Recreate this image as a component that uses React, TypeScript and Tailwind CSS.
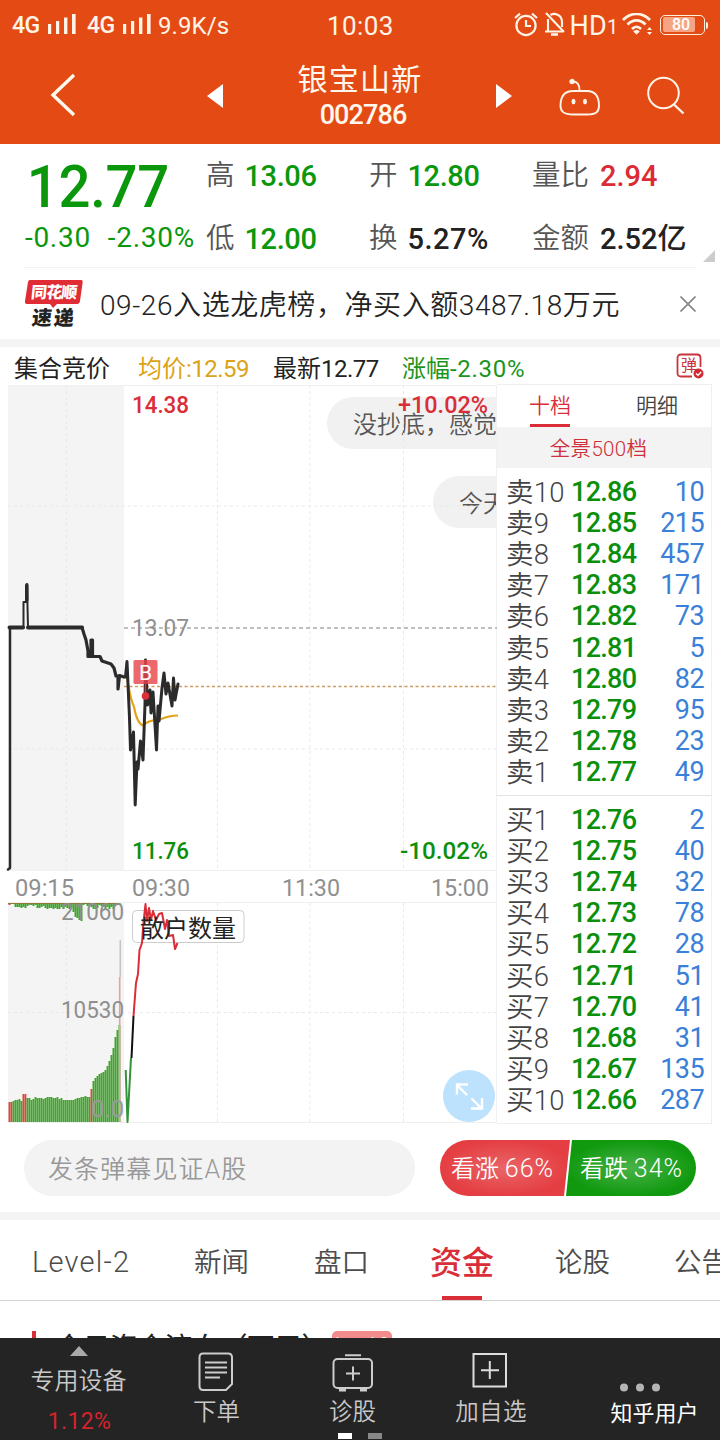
import React from "react";

type Level = { label: string; price: string; volume: string };

const sells: Level[] = [
  { label: "卖10", price: "12.86", volume: "10" },
  { label: "卖9", price: "12.85", volume: "215" },
  { label: "卖8", price: "12.84", volume: "457" },
  { label: "卖7", price: "12.83", volume: "171" },
  { label: "卖6", price: "12.82", volume: "73" },
  { label: "卖5", price: "12.81", volume: "5" },
  { label: "卖4", price: "12.80", volume: "82" },
  { label: "卖3", price: "12.79", volume: "95" },
  { label: "卖2", price: "12.78", volume: "23" },
  { label: "卖1", price: "12.77", volume: "49" },
];

const buys: Level[] = [
  { label: "买1", price: "12.76", volume: "2" },
  { label: "买2", price: "12.75", volume: "40" },
  { label: "买3", price: "12.74", volume: "32" },
  { label: "买4", price: "12.73", volume: "78" },
  { label: "买5", price: "12.72", volume: "28" },
  { label: "买6", price: "12.71", volume: "51" },
  { label: "买7", price: "12.70", volume: "41" },
  { label: "买8", price: "12.68", volume: "31" },
  { label: "买9", price: "12.67", volume: "135" },
  { label: "买10", price: "12.66", volume: "287" },
];

function Signal() {
  return (
    <svg width="28" height="20" viewBox="0 0 28 20" fill="#fff4e8">
      <rect x="0" y="10" width="3.2" height="10" />
      <rect x="8" y="7" width="3.2" height="13" />
      <rect x="16" y="3.5" width="3.4" height="16.5" />
      <rect x="24" y="0" width="3.6" height="20" />
    </svg>
  );
}

function StatusBar() {
  return (
    <div className="relative flex h-12 items-center pt-[2px] text-[#fff4e8]">
      <span className="ml-3 mt-[2px] w-[36px] text-[23px] font-medium tracking-[-0.5px]">4G</span>
      <span className="-mt-[3px]"><Signal /></span>
      <span className="ml-[11px] mt-[2px] w-[36px] text-[23px] font-medium tracking-[-0.5px]">4G</span>
      <span className="-mt-[3px]"><Signal /></span>
      <span className="ml-[7px] mt-[2px] text-[24px] tracking-[0.1px]">9.9K/s</span>
      <span className="absolute left-[327px] top-[11px] text-[26px] leading-[30px] tracking-[0.4px]">10:03</span>
      <div className="ml-auto flex items-center pr-[12px]">
        <svg width="24" height="26" viewBox="0 0 24 26" fill="none" stroke="#fff4e8" strokeWidth="2.2">
          <circle cx="12" cy="13.500" r="9.6" />
          <path d="M12 8V14H17M1 6L6 1.700M23 6L18 1.700" />
        </svg>
        <svg className="ml-[6px]" width="22" height="26" viewBox="0 0 22 26" fill="none" stroke="#fff4e8" strokeWidth="2.1">
          <path d="M1 19.500H19M4 19V7M6.500 3C10 0.800 18 2 18 10V15M2 1L20 20" />
          <path d="M7 22.500H14" strokeWidth="2.600" />
        </svg>
        <span className="ml-[3px] mt-[1px] text-[27px] leading-[30px] tracking-[0.3px]">HD</span>
        <span className="mt-[4px] w-[9px] text-[20px] leading-[20px]">1</span>
        <svg className="ml-[6px]" width="31" height="24" viewBox="0 0 31 24" fill="none" stroke="#fff4e8" strokeWidth="2.700">
          <path d="M1 7C9 -1 20 -1 28 7M5.500 11.500C11 6 18 6 23.500 11.500M10 16C13 13 16 13 19 16" />
          <path d="M14.500 21L11.700 18.500Q14.500 16 17.300 18.500Z" fill="#fff4e8" strokeWidth="1" />
          <path d="M25 17L27.500 14L30 17ZM25 19L27.500 22L30 19Z" fill="#fff4e8" stroke="none" />
        </svg>
        <div className="-mt-px ml-[7px] flex h-[20px] w-[45px] rounded-[5px] border-[1.5px] border-[#fff0dc] p-[1.5px]">
          <div className="flex w-[32px] items-center justify-center rounded-[2px] bg-[#f5a583] pl-[5px] text-[16px] font-medium leading-none text-white">80</div>
        </div>
        <div className="ml-px h-[7px] w-[2px] rounded-r bg-[#fff0dc]" />
      </div>
    </div>
  );
}

function TitleBar() {
  return (
    <div className="flex h-24 items-center">
      <svg className="-mt-[3px] ml-[50px]" width="26" height="44" viewBox="0 0 26 44" fill="none" stroke="#fffaf0" strokeWidth="3.400">
        <path d="M24 2L3 22L24 42" />
      </svg>
      <svg className="ml-[131px]" width="16" height="24" viewBox="0 0 16 24" fill="#fff">
        <path d="M16 0V24L0 12Z" />
      </svg>
      <div className="ml-[64px] flex w-[152px] flex-col items-center text-[#fff8ee]">
        <span className="mr-[6px] text-[30px] leading-[38px] tracking-[1.2px]">银宝山新</span>
        <span className="text-[27px] font-medium leading-[32px] tracking-[-0.900px]">002786</span>
      </div>
      <svg className="ml-[57px]" width="16" height="24" viewBox="0 0 16 24" fill="#fff">
        <path d="M0 0V24L16 12Z" />
      </svg>
      <svg className="ml-[47px] mt-[2px]" width="42" height="38" viewBox="0 0 42 38" fill="none" stroke="#fff4e8" strokeWidth="1.900">
        <path d="M13.500 3.500C18 3.500 20.500 5.500 20.500 12.500" />
        <circle cx="13" cy="3.500" r="1.700" fill="#fff4e8" />
        <path d="M14 13H28C36 13 40 18 40 28C40 34 37 36.500 28 36.500H14C5 36.500 1.500 34 1.500 28C1.500 18 6 13 14 13Z" />
        <ellipse cx="14.500" cy="23.500" rx="2" ry="2.700" fill="#fff4e8" stroke="none" />
        <ellipse cx="26" cy="23.500" rx="2" ry="2.700" fill="#fff4e8" stroke="none" />
      </svg>
      <svg className="ml-[45px]" width="40" height="40" viewBox="0 0 40 40" fill="none" stroke="#fff4e8" strokeWidth="2">
        <circle cx="17.500" cy="17" r="15.300" />
        <path d="M28 28.500L37.500 37.500" strokeWidth="2.400" />
      </svg>
    </div>
  );
}

function Stat({ label, value, color }: { label: string; value: string; color: string }) {
  return (
    <div className="flex items-center whitespace-nowrap">
      <span className="mr-[10px] mt-px text-[28.5px] font-[350] text-[#555]">{label}</span>
      <span className={"text-[29px] font-medium " + color}>{value}</span>
    </div>
  );
}

function Quote() {
  return (
    <section className="relative h-[124px] leading-[40px]">
      <div className="mx-6 grid h-[124px] grid-cols-[182px_163px_163px_1fr] grid-rows-[63px_60px] border-b border-[#f2f2f2]">
        <div className="origin-left scale-x-[0.938] pl-[3px] pt-[10px] text-[60px] font-medium leading-[66px] tracking-[-0.300px] text-[#0b970b]">12.77</div>
        <div className="pt-[11px]"><Stat label="高" value="13.06" color="tracking-[-0.4px] text-[#0b970b]" /></div>
        <div className="pt-[11px]"><Stat label="开" value="12.80" color="tracking-[-0.4px] text-[#0b970b]" /></div>
        <div className="pt-[11px]"><Stat label="量比" value="2.94" color="pl-px text-[#db2b36]" /></div>
        <div className="flex gap-[17px] whitespace-nowrap pl-px pt-[11px] text-[28px] tracking-[0.700px] text-[#0b970b]"><span>-0.30</span><span>-2.30%</span></div>
        <div className="pt-[11px]"><Stat label="低" value="12.00" color="tracking-[-0.4px] text-[#0b970b]" /></div>
        <div className="pt-[11px]"><Stat label="换" value="5.27%" color="tracking-[0.5px] text-[#222]" /></div>
        <div className="pt-[11px]"><Stat label="金额" value="2.52亿" color="pl-px text-[#222]" /></div>
      </div>
      <svg className="absolute bottom-[6px] right-[5px]" width="12" height="12" viewBox="0 0 12 12"><path d="M12 0V12H0Z" fill="#ccc" /></svg>
    </section>
  );
}

function News() {
  return (
    <section className="flex h-[71px] items-center">
      <div className="relative ml-6 h-[50px] w-[60px] shrink-0">
        <svg className="absolute inset-0" width="60" height="50" viewBox="0 0 60 50">
          <path d="M6 1H57Q59 1 58.700 3L56 22Q55.600 25 53 25H33L29 29L26 25H3Q0.500 25 1 22L4 3Q4.300 1 6 1Z" fill="#df2c35" />
        </svg>
        <span className="absolute left-[7px] top-[4px] -skew-x-6 whitespace-nowrap text-[16px] font-black leading-[20px] tracking-[-0.800px] text-white">同花顺</span>
        <span className="absolute left-[8px] top-[28px] -skew-x-6 whitespace-nowrap text-[20px] font-black leading-[22px] tracking-[2px] text-[#222]">速递</span>
      </div>
      <span className="ml-4 mt-[5px] whitespace-nowrap text-[28px] font-[350] leading-[40px] tracking-[0.580px] text-[#222]">09-26入选龙虎榜，净买入额3487.18万元</span>
      <svg className="ml-auto mr-6" width="16" height="16" viewBox="0 0 16 16" stroke="#888" strokeWidth="1.700"><path d="M0.500 0.500L15.500 15.500M15.500 0.500L0.500 15.500" /></svg>
    </section>
  );
}

function ChartInfo() {
  return (
    <div className="flex h-[37px] items-center whitespace-nowrap pt-[6px] text-[24px] leading-[34px] text-[#222]">
      <span className="ml-[14px] w-[124px]">集合竞价</span>
      <span className="w-[135px] text-[#dba318]">均价<span className="tracking-[-0.500px]">:12.59</span></span>
      <span className="w-[129px]">最新<span className="tracking-[-0.500px]">12.77</span></span>
      <span className="text-[#1c9420]">涨幅<span className="tracking-[0.700px]">-2.30%</span></span>
      <div className="relative -mt-[6px] ml-auto mr-4 h-[26px] w-[28px]">
        <svg width="28" height="26" viewBox="0 0 28 26" fill="none" stroke="#c9343c" strokeWidth="1.800">
          <path d="M16 23.500H5Q1.500 23.500 1.500 20V5Q1.500 1.500 5 1.500H21Q24.500 1.500 24.500 5V14" />
          <circle cx="22.500" cy="20.500" r="5" fill="#d02c36" stroke="none" />
          <path d="M20 20.500L22 22.300L25.200 19" stroke="#fff" strokeWidth="1.400" />
        </svg>
        <span className="absolute left-[5px] top-[5px] text-[16px] leading-[16px] text-[#c9343c]">弹</span>
      </div>
    </div>
  );
}

const volumeTops = [
  1102, 1102, 1101, 1100, 1100, 1099, 1101, 1094, 1094, 1098, 1098, 1100, 1099, 1097, 1098, 1098, 1098, 1099, 1098, 1097,
  1097, 1097, 1098, 1098, 1097, 1099, 1098, 1100, 1100, 1100, 1100, 1100, 1100, 1099, 1098, 1098, 1097, 1097, 1096, 1097,
  1097, 1089, 1081, 1078, 1076, 1074, 1073, 1072, 1070, 1066, 1061, 1055, 1048, 1037, 1030, 1025,
];
const hangDepths = [
  2, 1, 1, 4, 4, 4, 5, 4, 5, 3, 2, 2, 3, 2, 5, 5, 4, 3, 5, 6, 5, 5, 6, 5, 6, 6, 4, 6, 4, 5, 6, 5, 9, 14, 15, 17,
  18, 2, 1, 3, 3, 4, 6, 6, 5, 2, 3, 4, 6, 4, 6, 4, 6, 3, 2, 2,
];

function Label({ x, y, w, weight = 500, color, children }: { x: number; y: number; w: number; weight?: number; color: string; children: string }) {
  return <text x={x} y={y} fontSize={24} textLength={w} lengthAdjust="spacingAndGlyphs" fill={color} fontWeight={weight}>{children}</text>;
}

function Chart() {
  return (
    <div className="relative h-[740px] w-[497px] shrink-0 overflow-hidden">
      <div className="absolute left-[327px] top-[13px] flex h-[52px] w-[300px] items-center rounded-full bg-[#f1f1f1] pl-[26px] pt-[3px] text-[24px] font-[350] text-[#555]">没抄底，感觉</div>
      <div className="absolute left-[433px] top-[92px] flex h-[52px] w-[200px] items-center rounded-full bg-[#f1f1f1] pl-[26px] pt-[3px] text-[24px] font-[350] text-[#555]">今天</div>
      <svg className="absolute inset-0" width="497" height="740" viewBox="0 384 497 740" fill="none">
        <rect x="8" y="385" width="116" height="485" fill="#f4f4f4" />
        <rect x="8" y="903" width="116" height="219" fill="#f4f4f4" />
        <g stroke="#e9e9e9" strokeWidth="1" strokeDasharray="3 3">
          <path d="M66.500 385V870M217.500 385V870M310 385V870M403.500 385V870M8 506H497M8 749H497" />
          <path d="M66.500 903V1122M217.500 903V1122M310 903V1122M403.500 903V1122M8 1012.500H497" />
        </g>
        <path d="M8 385.500H497M8 870.500H497M8 902.500H497M8 1122.500H497M496.500 385V1123" stroke="#f0f0f0" />
        <path d="M124 628H497" stroke="#aaa" strokeWidth="1.500" strokeDasharray="4 3" />
        <path d="M124 686.500H497" stroke="#cf9a60" strokeWidth="1.500" strokeDasharray="3 2.500" />

        <Label x={132} y={413} w={57} color="#d92d38">14.38</Label>
        <Label x={398} y={413} w={90} color="#d92d38">+10.02%</Label>
        <Label x={132} y={636} w={57} weight={400} color="#8f8f8f">13.07</Label>
        <Label x={132} y={859} w={57} color="#0b8f0b">11.76</Label>
        <Label x={400} y={859} w={88} color="#0b8f0b">-10.02%</Label>
        <Label x={15} y={896} w={59} weight={400} color="#8f8f8f">09:15</Label>
        <Label x={132} y={896} w={58} weight={400} color="#8f8f8f">09:30</Label>
        <Label x={282} y={896} w={58} weight={400} color="#8f8f8f">11:30</Label>
        <Label x={431} y={896} w={58} weight={400} color="#8f8f8f">15:00</Label>

        <path d="M127 678C129 688 130 698 134 707C136 718 139 724 143 725.500C148 720 155 720 160 719.500C168 716 173 715.500 178 715.500" stroke="#e3a41c" strokeWidth="2.200" />
        <g stroke="#2b2b2b" strokeLinejoin="round" strokeLinecap="round">
          <path d="M8 869.500L10 868V628" strokeWidth="2.500" />
          <path d="M9.500 627.500H23.500V602H26L27 584L28 627.500H82" strokeWidth="2" />
          <path d="M26.800 585V600" strokeWidth="3.600" />
          <path d="M9.500 627.500H23M28 627.500H82" strokeWidth="4" />
          <path d="M82 627.500L84 634L86 640L88 651V656.500H91V640H92.500V656.500H100L102 661L111 664L114 668L116 676H118V689L119.500 675.500L124 677" strokeWidth="3.200" />
          <path d="M125.500 677L127 661.500L129.500 718L130.500 750L133.500 732L135.200 805L137 762L138 769L140.500 741L143 760L145 704L145.500 660L147.500 705L150 690L151 713L153 692L156.500 750L158 706L159 721L162 688L164 673L166 694L168 683L172 706L173.500 678L175 700L178 684" strokeWidth="3" />
        </g>
        <rect x="133.500" y="660" width="24" height="24" rx="1.500" fill="#e9474d" fillOpacity="0.820" />
        <text x="145.500" y="680" textAnchor="middle" fontSize="21" fill="#fff">B</text>
        <path d="M145.500 684V695" stroke="#db3039" strokeWidth="1.500" />
        <circle cx="145.500" cy="696" r="3.800" fill="#db3039" />

        {volumeTops.map((top, i) => (
          <rect key={i} x={8.5 + i * 2} y={top} width="1.900" height={1122 - top} fill={i < 2 || i === 7 || i === 8 || i === 41 ? "#d64b3c" : "#43a330"} />
        ))}
        {hangDepths.map((depth, i) => (
          <rect key={i} x={8.5 + i * 2} y={903} width="2" height={depth} fill={i < 3 ? "#d64b3c" : "#43a330"} />
        ))}
        <path d="M8 903.500H120" stroke="#8b7a35" strokeWidth="1.200" />
        <path d="M120.300 940V977" stroke="#c5c5c5" strokeWidth="1.600" />
        <path d="M119.700 977V1122" stroke="#dca5a5" strokeWidth="1.600" />
        <Label x={61} y={920} w={63} weight={400} color="#8f8f8f">21060</Label>
        <Label x={61} y={1018} w={63} weight={400} color="#8f8f8f">10530</Label>
        <Label x={91} y={1117} w={33} weight={400} color="#9a9a9a">0.0</Label>

        <rect x="132.500" y="910.500" width="111.500" height="32" rx="4" fill="#fff" stroke="#ccc" />
        <g strokeWidth="2" strokeLinejoin="round">
          <path d="M125.700 1070L127.500 1122L131 1058" stroke="#33923a" />
          <path d="M131.500 1058L133.500 1016" stroke="#111" />
          <path d="M133.500 1016L136 983L138 974L139.500 950L142 943L143.500 922L145.500 904L147 921L149 908L151 920L153 911L156 920L159 914L162 913L165 929L167 920L169 936L173 935L175 949L177.500 943" stroke="#db2d37" />
        </g>
        <text x="140" y="937" fontSize="24" fill="#222">散户数量</text>

        <circle cx="469" cy="1096" r="26" fill="#bde2fd" />
        <path d="M457 1094.500V1084.500H468M457.500 1085.500L467 1095M482 1098V1108.500H471M481 1108L471.500 1098.500" stroke="#fff" strokeWidth="2.400" />
      </svg>
    </div>
  );
}

function Levels({ rows }: { rows: Level[] }) {
  return (
    <div className="flex h-[312px] flex-col">
      {rows.map((r) => (
        <div key={r.label} className="flex min-h-0 flex-1 items-center leading-[28px]">
          <span className="mt-[2px] w-[65px] text-[27.5px] font-[350] tracking-[0.300px] text-[#444]">{r.label}</span>
          <span className="text-[27px] font-medium tracking-[-0.700px] text-[#0b8f0b]">{r.price}</span>
          <span className="ml-auto text-[27px] tracking-[-0.600px] text-[#3b80d8]">{r.volume}</span>
        </div>
      ))}
    </div>
  );
}

function OrderBook() {
  return (
    <div className="h-[740px] w-[215px] border-r border-b border-t border-[#efefef]">
      <div className="flex h-[42px] text-[21px] font-[350] leading-[42px]">
        <div className="relative flex w-[106px] justify-center text-[#d92d38]">
          十档
          <div className="absolute bottom-0 h-[3px] w-10 bg-[#d92d38]" />
        </div>
        <div className="flex flex-1 justify-center text-[#444]">明细</div>
      </div>
      <div className="flex h-[41px] items-center justify-center bg-[#f3f3f3] pr-[11px] pt-[4px] text-[20.5px] font-[350] tracking-[0.3px] text-[#cf2f39]">全景500档</div>
      <div className="pl-[9px] pr-[7px] pt-[8px]"><Levels rows={sells} /></div>
      <div className="mb-[7px] mt-[7px] h-px bg-[#e3e3e3]" />
      <div className="pl-[9px] pr-[7px] pt-px"><Levels rows={buys} /></div>
    </div>
  );
}

function Vote() {
  return (
    <section className="flex h-[88px] items-start pt-4">
      <div className="ml-6 flex h-14 w-[391px] items-center rounded-full bg-[#f3f3f3] pl-6 pt-[4px] text-[25px] font-[350] tracking-[1.1px] text-[#999]">发条弹幕见证A股</div>
      <div className="relative ml-[25px] h-14 w-[256px] overflow-hidden rounded-full text-[24px] font-[350] leading-[56px] text-white">
        <svg className="absolute inset-0" width="256" height="56" viewBox="0 0 256 56">
          <defs>
            <radialGradient id="up"><stop offset="0" stopColor="#ea6568" /><stop offset="1" stopColor="#e43e42" /></radialGradient>
            <radialGradient id="down"><stop offset="0" stopColor="#48b348" /><stop offset="1" stopColor="#10990f" /></radialGradient>
          </defs>
          <rect width="256" height="56" fill="#fff" />
          <path d="M0 0H130L124 56H0Z" fill="url(#up)" />
          <path d="M132 0H256V56H126Z" fill="url(#down)" />
        </svg>
        <div className="relative flex whitespace-nowrap pl-[11px] pt-[1px]">
          <span className="w-[129px]">看涨 <span className="text-[25px] tracking-[1px]">66%</span></span>
          <span>看跌 <span className="text-[25px] tracking-[1px]">34%</span></span>
        </div>
      </div>
    </section>
  );
}

function Tabs() {
  return (
    <nav className="relative flex h-[81px] items-center overflow-hidden whitespace-nowrap border-b border-[#d2d2d2] pt-[5px] text-[27.5px] font-[350] text-[#4c4c4c]">
      <span className="ml-8 w-[162px] shrink-0 text-[29px] tracking-[1.200px]">Level-2</span>
      <span className="w-[120px] shrink-0">新闻</span>
      <span className="w-[116px] shrink-0">盘口</span>
      <span className="w-[125px] shrink-0 text-[32px] font-medium text-[#d92d38]">资金</span>
      <span className="w-[119px] shrink-0">论股</span>
      <span className="shrink-0">公告</span>
      <div className="absolute bottom-0 left-[442px] h-1 w-10 bg-[#d92d38]" />
    </nav>
  );
}

function Peek() {
  return (
    <div className="flex h-[37px] items-start overflow-hidden pt-[30px]">
      <div className="ml-8 h-7 w-1 bg-[#d92d38]" />
      <span className="-mt-[2px] ml-[19px] w-[277px] whitespace-nowrap text-[28px] font-normal leading-[40px] tracking-[-0.6px] text-[#222]">今日资金流向（万元）</span>
      <div className="h-7 w-[60px] rounded-[5px] bg-[#f28b8b] text-center text-[17px] leading-[24px] text-white">Level-2</div>
    </div>
  );
}

function BottomNav() {
  return (
    <footer className="relative flex h-[102px] bg-[#242424] pl-[10px] text-[23.5px] font-[350] text-[#c9c9c9]">
      <div className="flex w-[137px] flex-col items-center pt-[8px]">
        <svg width="18" height="10" viewBox="0 0 18 10"><path d="M9 0L18 10H0Z" fill="#aaa" /></svg>
        <span className="mt-[9px] text-[24px] leading-[32px]">专用设备</span>
        <span className="ml-[2px] mt-[9px] text-[23px] font-normal leading-[32px] tracking-[0.4px] text-[#d5232d]">1.12%</span>
      </div>
      <div className="flex w-[137px] flex-col items-center pt-[14px]">
        <svg width="36" height="40" viewBox="0 0 36 40" fill="none" stroke="#ccc" strokeWidth="2">
          <path d="M5 1.500H30Q34 1.500 34 5.500V32L28 38H5Q1.500 38 1.500 34V5.500Q1.500 1.500 5 1.500Z" />
          <path d="M7 10.500H29M7 15.500H29M7 20.500H29M7 25.500H22" />
        </svg>
        <span className="ml-[2px] mt-[4px] leading-[32px]">下单</span>
      </div>
      <div className="flex w-[137px] flex-col items-center pt-[15px]">
        <svg width="42" height="39" viewBox="0 0 42 39" fill="none" stroke="#ccc" strokeWidth="2">
          <rect x="1.500" y="6" width="38.500" height="29" rx="4" />
          <path d="M13 2.300H29M21 13.500V27.500M14 20.500H28" />
          <path d="M7 37H14M28 37H35" strokeWidth="3" />
        </svg>
        <span className="mt-[4px] leading-[32px]">诊股</span>
      </div>
      <div className="flex w-[137px] flex-col items-center pt-[14px]">
        <svg width="36" height="36" viewBox="0 0 36 36" fill="none" stroke="#ddd" strokeWidth="2">
          <rect x="1.500" y="2" width="32.500" height="32.500" />
          <path d="M17.800 9V27M9 18.200H27" />
        </svg>
        <span className="ml-[3px] mt-[8px] leading-[32px] tracking-[0.300px]">加自选</span>
      </div>
      <div className="flex flex-1 flex-col items-center pt-[45px]">
        <svg width="42" height="10" viewBox="0 0 42 10" fill="#b5b5b5"><circle cx="6" cy="4.500" r="4" /><circle cx="22" cy="4.500" r="4" /><circle cx="38" cy="4.500" r="4" /></svg>
        <span className="ml-[31px] mt-[5px] whitespace-nowrap text-[22px] font-normal leading-[32px] text-white">知乎用户</span>
      </div>
      <div className="absolute bottom-[1px] left-[338px] flex gap-4">
        <div className="h-[6px] w-[14px] bg-white" />
        <div className="h-[6px] w-[14px] bg-[#888]" />
      </div>
    </footer>
  );
}

export default function App() {
  return (
    <div className="h-[1440px] w-[720px] overflow-hidden bg-white font-['Roboto','Noto_Sans_CJK_SC',sans-serif]">
      <header className="h-36 bg-[#e44b14]">
        <StatusBar />
        <TitleBar />
      </header>
      <Quote />
      <News />
      <div className="h-2 bg-[#f4f4f4]" />
      <ChartInfo />
      <div className="flex">
        <Chart />
        <OrderBook />
      </div>
      <Vote />
      <div className="h-2 bg-[#f4f4f4]" />
      <Tabs />
      <Peek />
      <BottomNav />
    </div>
  );
}
